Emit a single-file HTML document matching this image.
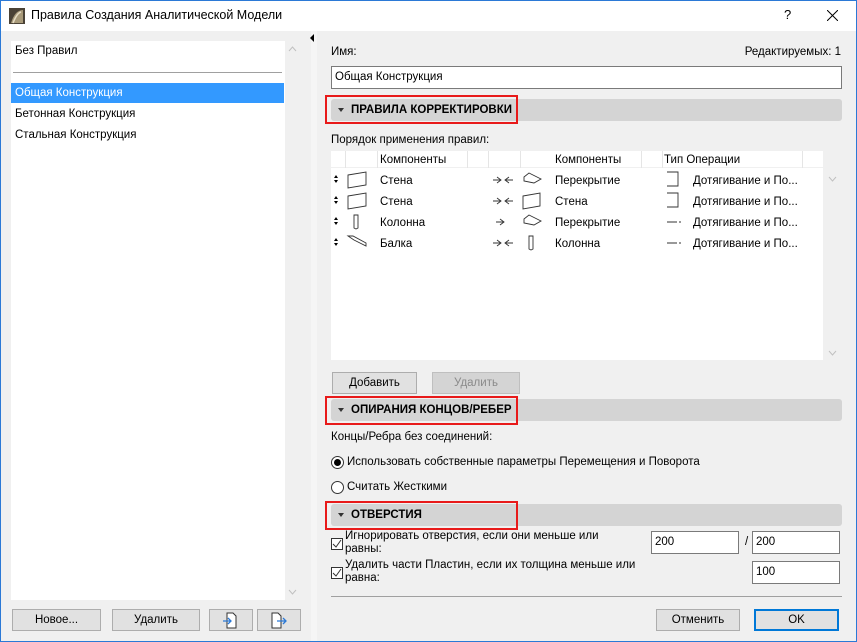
<!DOCTYPE html>
<html><head><meta charset="utf-8"><style>
*{box-sizing:border-box;margin:0;padding:0}
body{width:857px;height:642px;background:#f0f0f0;font-family:"Liberation Sans","DejaVu Sans",sans-serif;font-size:11.5px;color:#000;position:relative;overflow:hidden}
.a{position:absolute;white-space:nowrap}
.frame{position:absolute;left:0;top:0;width:857px;height:642px;border:1px solid #2b79d6;pointer-events:none}
.title{position:absolute;left:0;top:0;width:857px;height:31px;background:#fff}
.btn{position:absolute;height:22px;background:#e1e1e1;border:1px solid #adadad;text-align:center;line-height:20px;font-size:11.5px}
.bar{position:absolute;left:331px;width:511px;height:22px;background:#d4d4d4;border-radius:3px}
.red{position:absolute;left:325px;width:193px;height:29px;border:2px solid #e81a1a}
.bar span{position:absolute;left:20px;top:5px;font-weight:bold;font-size:11.5px}
.tri{position:absolute;left:7px;top:9px;width:0;height:0;border-left:3.5px solid transparent;border-right:3.5px solid transparent;border-top:4px solid #333}
.inp{position:absolute;background:#fff;border:1px solid #7a7a7a;height:23px;line-height:21px;padding-left:3px}
.cb{position:absolute;width:12px;height:12px;border:1px solid #333;background:#fff}
</style></head><body>
<div class="title"></div>
<svg class="a" style="left:9px;top:8px" width="16" height="16"><rect width="16" height="16" fill="#4a4236"/><path d="M2 15 Q6 2 14 2 L14 15 Z" fill="#a89a7a"/><path d="M4 15 Q8 5 12 4" stroke="#e6dcc4" stroke-width="1.5" fill="none"/></svg>
<div class="a" style="left:31px;top:8px;font-size:12.5px">Правила Создания Аналитической Модели</div>
<div class="a" style="left:784px;top:7px;font-size:13px">?</div>
<svg class="a" style="left:827px;top:10px" width="11" height="11"><path d="M0 0L11 11M11 0L0 11" stroke="#000" stroke-width="1"/></svg>

<div class="a" style="left:11px;top:41px;width:274px;height:559px;background:#fff"></div>
<div class="a" style="left:15px;top:45px">Без Правил</div>
<div class="a" style="left:13px;top:72px;width:269px;height:1px;background:#a0a0a0"></div>
<div class="a" style="left:11px;top:83px;width:273px;height:20px;background:#3399ff"></div>
<div class="a" style="left:15px;top:87px;color:#fff">Общая Конструкция</div>
<div class="a" style="left:15px;top:108px">Бетонная Конструкция</div>
<div class="a" style="left:15px;top:129px">Стальная Конструкция</div>
<svg class="a" style="left:288px;top:46px" width="9" height="6"><path d="M1 5L4.5 1L8 5" stroke="#c0c0c0" fill="none"/></svg>
<svg class="a" style="left:288px;top:589px" width="9" height="6"><path d="M1 1L4.5 5L8 1" stroke="#c0c0c0" fill="none"/></svg>
<div class="a" style="left:311px;top:31px;width:6px;height:611px;background:#f5f5f5"></div>
<svg class="a" style="left:309px;top:34px" width="6" height="8"><path d="M5 0L1 4L5 8Z" fill="#000"/></svg>

<div class="btn" style="left:12px;top:609px;width:89px">Новое...</div>
<div class="btn" style="left:112px;top:609px;width:88px">Удалить</div>
<div class="btn" style="left:209px;top:609px;width:44px"><svg width="20" height="18" style="margin-top:1px"><path d="M6 2h6l3 3v12h-9z" fill="#fff" stroke="#333"/><path d="M2 10h8M7 7l3 3-3 3" stroke="#2b79d6" fill="none" stroke-width="1.3"/></svg></div>
<div class="btn" style="left:257px;top:609px;width:44px"><svg width="20" height="18" style="margin-top:1px"><path d="M3 2h6l3 3v12h-9z" fill="#fff" stroke="#333"/><path d="M8 10h9M14 7l3 3-3 3" stroke="#2b79d6" fill="none" stroke-width="1.3"/></svg></div>

<div class="a" style="left:331px;top:46px">Имя:</div>
<div class="a" style="right:16px;top:46px">Редактируемых: 1</div>
<div class="inp" style="left:331px;top:66px;width:511px">Общая Конструкция</div>

<div class="bar" style="top:99px"><div class="tri"></div><span>ПРАВИЛА КОРРЕКТИРОВКИ</span></div>
<div class="red" style="top:95px"></div>
<div class="a" style="left:331px;top:134px">Порядок применения правил:</div>
<div class="a" style="left:331px;top:151px;width:492px;height:209px;background:#fff"></div>
<div class="a" style="left:331px;top:151px;width:492px;height:17px;border-bottom:1px solid #f0f0f0"></div>
<div class="a" style="left:345px;top:151px;width:1px;height:17px;background:#e5e5e5"></div>
<div class="a" style="left:377px;top:151px;width:1px;height:17px;background:#e5e5e5"></div>
<div class="a" style="left:467px;top:151px;width:1px;height:17px;background:#e5e5e5"></div>
<div class="a" style="left:488px;top:151px;width:1px;height:17px;background:#e5e5e5"></div>
<div class="a" style="left:520px;top:151px;width:1px;height:17px;background:#e5e5e5"></div>
<div class="a" style="left:641px;top:151px;width:1px;height:17px;background:#e5e5e5"></div>
<div class="a" style="left:662px;top:151px;width:1px;height:17px;background:#e5e5e5"></div>
<div class="a" style="left:802px;top:151px;width:1px;height:17px;background:#e5e5e5"></div>
<div class="a" style="left:380px;top:154px">Компоненты</div>
<div class="a" style="left:555px;top:154px">Компоненты</div>
<div class="a" style="left:664px;top:154px">Тип Операции</div>
<svg class="a" style="left:331px;top:168px" width="480" height="90" font-family="Liberation Sans" font-size="11.5">
<g fill="#000"><path d="M3 10l2-3 2 3zM3 12l2 3 2-3z"/><path d="M3 31l2-3 2 3zM3 33l2 3 2-3z"/><path d="M3 52l2-3 2 3zM3 54l2 3 2-3z"/><path d="M3 73l2-3 2 3zM3 75l2 3 2-3z"/></g>
<g stroke="#333" fill="none" stroke-width="0.9">
<path d="M17 7l18-3v13l-18 3z"/><path d="M17 28l18-3v13l-18 3z"/>
<path d="M23 47h4v13l-2 1-2-1z"/><path d="M17 68l5 0 13 7v3l-12-6z"/>
<path d="M162 12h8M166 9l4 3-4 3M182 12h-8M178 9l-4 3 4 3"/>
<path d="M162 33h8M166 30l4 3-4 3M182 33h-8M178 30l-4 3 4 3"/>
<path d="M165 54h8M169 51l4 3-4 3"/>
<path d="M162 75h8M166 72l4 3-4 3M182 75h-8M178 72l-4 3 4 3"/>
<path d="M193 9l5-4 12 6-7 4-10-2z"/>
<path d="M192 28l17-3v13l-17 3z"/>
<path d="M193 51l5-4 12 6-7 4-10-2z"/>
<path d="M198 68h4v13l-2 1-2-1z"/>
<path d="M336 4h11v14h-11"/><path d="M336 25h11v14h-11"/>
<path d="M336 54h10M348 54h2"/><path d="M336 75h10M348 75h2"/>
</g>
<g fill="#000"><text x="49" y="16">Стена</text><text x="49" y="37">Стена</text><text x="49" y="58">Колонна</text><text x="49" y="79">Балка</text>
<text x="224" y="16">Перекрытие</text><text x="224" y="37">Стена</text><text x="224" y="58">Перекрытие</text><text x="224" y="79">Колонна</text>
<text x="362" y="16">Дотягивание и По...</text><text x="362" y="37">Дотягивание и По...</text><text x="362" y="58">Дотягивание и По...</text><text x="362" y="79">Дотягивание и По...</text></g>
</svg>
<svg class="a" style="left:828px;top:176px" width="9" height="6"><path d="M1 1L4.5 5L8 1" stroke="#c0c0c0" fill="none"/></svg>
<svg class="a" style="left:828px;top:350px" width="9" height="6"><path d="M1 1L4.5 5L8 1" stroke="#c0c0c0" fill="none"/></svg>
<div class="btn" style="left:332px;top:372px;width:85px">Добавить</div>
<div class="btn" style="left:432px;top:372px;width:88px;background:#d4d4d4;border-color:#bfbfbf;color:#8a8a8a">Удалить</div>

<div class="bar" style="top:399px"><div class="tri"></div><span>ОПИРАНИЯ КОНЦОВ/РЕБЕР</span></div>
<div class="red" style="top:396px"></div>
<div class="a" style="left:331px;top:431px">Концы/Ребра без соединений:</div>
<svg class="a" style="left:331px;top:456px" width="13" height="13"><circle cx="6.5" cy="6.5" r="6" fill="#fff" stroke="#333"/><circle cx="6.5" cy="6.5" r="3.5" fill="#000"/></svg>
<div class="a" style="left:347px;top:456px">Использовать собственные параметры Перемещения и Поворота</div>
<svg class="a" style="left:331px;top:481px" width="13" height="13"><circle cx="6.5" cy="6.5" r="6" fill="#fff" stroke="#333"/></svg>
<div class="a" style="left:347px;top:481px">Считать Жесткими</div>

<div class="bar" style="top:504px"><div class="tri"></div><span>ОТВЕРСТИЯ</span></div>
<div class="red" style="top:501px"></div>
<div class="cb" style="left:331px;top:538px"><svg width="10" height="10" style="position:absolute;left:0;top:0"><path d="M1 5l3 3 5-7" stroke="#333" fill="none"/></svg></div>
<div class="a" style="left:345px;top:530px;line-height:13px">Игнорировать отверстия, если они меньше или<br>равны:</div>
<div class="cb" style="left:331px;top:567px"><svg width="10" height="10" style="position:absolute;left:0;top:0"><path d="M1 5l3 3 5-7" stroke="#333" fill="none"/></svg></div>
<div class="a" style="left:345px;top:559px;line-height:13px;height:26px;overflow:hidden">Удалить части Пластин, если их толщина меньше или<br>равна:</div>
<div class="inp" style="left:651px;top:531px;width:88px">200</div>
<div class="a" style="left:745px;top:536px">/</div>
<div class="inp" style="left:752px;top:531px;width:88px">200</div>
<div class="inp" style="left:752px;top:561px;width:88px">100</div>
<div class="a" style="left:331px;top:596px;width:511px;height:1px;background:#a0a0a0"></div>
<div class="btn" style="left:656px;top:609px;width:84px">Отменить</div>
<div class="btn" style="left:754px;top:609px;width:85px;border:2px solid #0078d7;line-height:18px">OK</div>
<div class="frame"></div>
</body></html>
